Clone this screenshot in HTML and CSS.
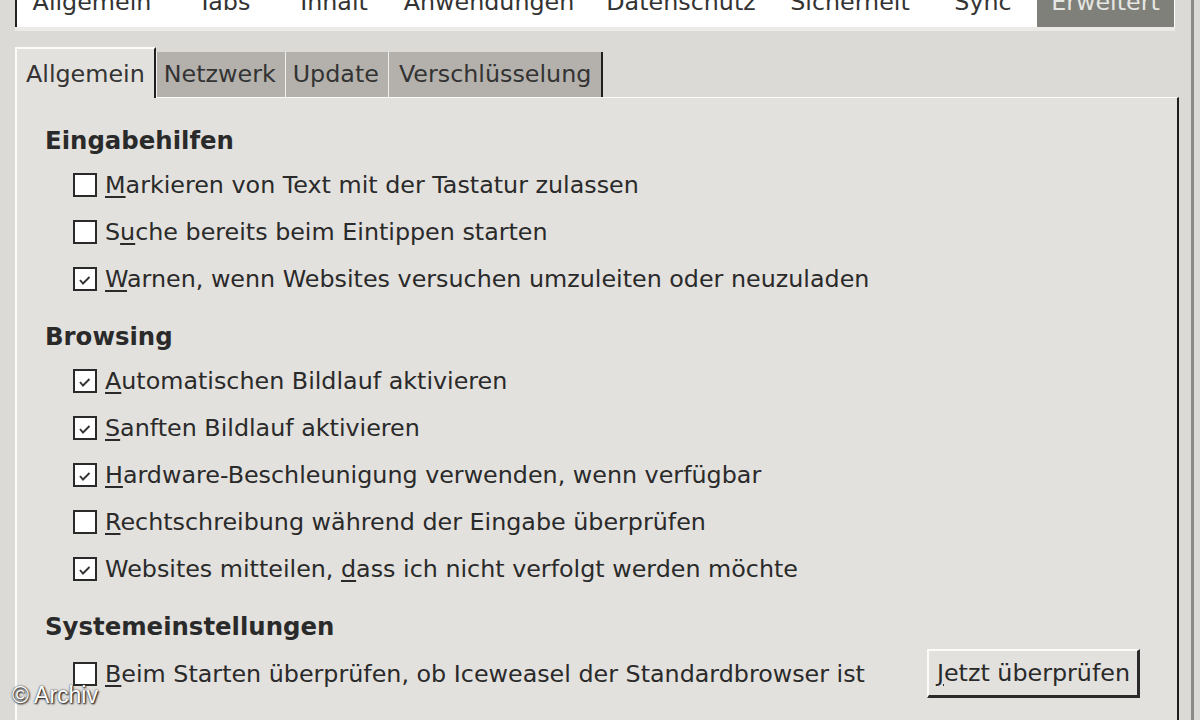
FILE: index.html
```html
<!DOCTYPE html>
<html lang="de">
<head>
  <meta charset="UTF-8" />
  <title>Iceweasel-Einstellungen</title>
  <link rel="stylesheet" href="styles.css">
</head>
<body>

  <div class="window">
    <div class="toolbar">
      <div class="tool tool-first"><span>Allgemein</span></div>
      <div class="tool tool-tabs"><span>Tabs</span></div>
      <div class="tool tool-inhalt"><span>Inhalt</span></div>
      <div class="tool tool-anw"><span>Anwendungen</span></div>
      <div class="tool tool-daten"><span>Datenschutz</span></div>
      <div class="tool tool-sich"><span>Sicherheit</span></div>
      <div class="tool tool-sync"><span>Sync</span></div>
      <div class="tool tool-active"><span>Erweitert</span></div>
    </div>
    <div class="toolbar-shade"></div>

    <div class="notebook">
      <div class="tabs">
        <div class="tab active">Allgemein</div>
        <div class="tab">Netzwerk</div>
        <div class="tab">Update</div>
        <div class="tab last">Verschlüsselung</div>
      </div>

      <div class="panel">
        <div class="group">
          <div class="heading">Eingabehilfen</div>
          <div class="row"><span class="check"></span><span><u>M</u>arkieren von Text mit der Tastatur zulassen</span></div>
          <div class="row"><span class="check"></span><span>S<u>u</u>che bereits beim Eintippen starten</span></div>
          <div class="row"><span class="check on"><svg viewBox="0 0 20 20"><path d="M5 11 L8 14.5 L14.5 8" /></svg></span><span><u>W</u>arnen, wenn Websites versuchen umzuleiten oder neuzuladen</span></div>
        </div>

        <div class="group">
          <div class="heading">Browsing</div>
          <div class="row"><span class="check on"><svg viewBox="0 0 20 20"><path d="M5 11 L8 14.5 L14.5 8" /></svg></span><span><u>A</u>utomatischen Bildlauf aktivieren</span></div>
          <div class="row"><span class="check on"><svg viewBox="0 0 20 20"><path d="M5 11 L8 14.5 L14.5 8" /></svg></span><span><u>S</u>anften Bildlauf aktivieren</span></div>
          <div class="row"><span class="check on"><svg viewBox="0 0 20 20"><path d="M5 11 L8 14.5 L14.5 8" /></svg></span><span><u>H</u>ardware-Beschleunigung verwenden, wenn verfügbar</span></div>
          <div class="row"><span class="check"></span><span><u>R</u>echtschreibung während der Eingabe überprüfen</span></div>
          <div class="row"><span class="check on"><svg viewBox="0 0 20 20"><path d="M5 11 L8 14.5 L14.5 8" /></svg></span><span>Websites mitteilen, <u>d</u>ass ich nicht verfolgt werden möchte</span></div>
        </div>

        <div class="group">
          <div class="heading">Systemeinstellungen</div>
          <div class="row row-button">
            <span class="check"></span><span><u>B</u>eim Starten überprüfen, ob Iceweasel der Standardbrowser ist</span>
            <button type="button" class="btn"><u>J</u>etzt überprüfen</button>
          </div>
        </div>
      </div>
    </div>
  </div>

  <div class="credit">© Archiv</div>

</body>
</html>
```

FILE: styles.css
```css
body {
  margin: 0;
  background: #dcdad6;
  font-family: "DejaVu Sans", Verdana, sans-serif;
  font-size: 23.8px;
  color: #2a2a2a;
  overflow: hidden;
}

.window {
  width: 1194px;
  height: 720px;
  border-right: 3px solid #8c8a86;
  box-sizing: border-box;
  display: flex;
  flex-direction: column;
}

.toolbar {
  display: flex;
  height: 27px;
  margin-right: 16px;
  margin-left: 15px;
  background: #fff;
  border-left: 2px solid #222;
  overflow: hidden;
}

.tool {
  height: 27px;
  text-align: center;
  color: #333;
  box-sizing: border-box;
}

.tool span {
  display: block;
  margin-top: -13px;
  line-height: 30px;
  white-space: nowrap;
}

.tool-first { width: 150px; }
.tool-tabs { width: 114px; }
.tool-inhalt { width: 106px; }
.tool-anw { width: 204px; }
.tool-daten { width: 180px; }
.tool-sich { width: 158px; }
.tool-sync { width: 108px; }

.tool-active {
  width: 137px;
  background: #7e8079;
  color: #e6e6e2;
}

.toolbar-shade {
  height: 4px;
  margin-left: 15px;
  margin-right: 16px;
  background: #ebeae7;
}

.notebook {
  flex: 1;
  display: flex;
  flex-direction: column;
  margin: 16px 12px 0 15px;
}

.tabs {
  display: flex;
  align-items: flex-end;
  height: 50px;
}

.tab {
  height: 45px;
  line-height: 45px;
  padding: 0 9px 0 7px;
  background: #b4b1ad;
  border-left: 1px solid #f1f0ee;
  color: #333;
  white-space: nowrap;
}

.tab.active {
  position: relative;
  height: 51px;
  margin-bottom: -1px;
  line-height: 50px;
  padding: 0 9px 0 9px;
  background: #e3e1de;
  border-left: 2px solid #fbfbfa;
  border-top: 2px solid #fbfbfa;
  border-right: 2px solid #1e1e1e;
  box-sizing: border-box;
  z-index: 1;
}

.tab.last {
  padding-left: 10px;
  padding-right: 10px;
  border-right: 2px solid #1e1e1e;
}

.panel {
  flex: 1;
  background: #e3e1de;
  border-top: 1px solid #fbfbfa;
  border-left: 2px solid #fbfbfa;
  border-right: 2px solid #1e1e1e;
  padding: 23px 37px 0 28px;
}

.group {
  margin-bottom: 15px;
}

.heading {
  height: 40px;
  line-height: 40px;
  font-weight: bold;
  font-size: 24.4px;
}

.row {
  display: flex;
  align-items: center;
  height: 47px;
  padding-left: 28px;
  white-space: nowrap;
}

.row-button {
  margin-top: 3px;
}

.row u {
  text-underline-offset: 3px;
}

.check {
  width: 24px;
  height: 24px;
  margin-right: 8px;
  background: #fff;
  border: 2px solid #2a2a2a;
  box-sizing: border-box;
  flex-shrink: 0;
}

.check svg {
  display: block;
  width: 20px;
  height: 20px;
}

.check svg path {
  fill: none;
  stroke: #333;
  stroke-width: 1.9;
}

.btn {
  margin-left: auto;
  height: 49px;
  padding: 0 7px 0 8px;
  font-family: inherit;
  font-size: 23.8px;
  color: #2a2a2a;
  background: #e3e1de;
  border-top: 2px solid #fbfbfa;
  border-left: 2px solid #fbfbfa;
  border-bottom: 3px solid #2a2a2a;
  border-right: 3px solid #2a2a2a;
}

.credit {
  position: absolute;
  left: 12px;
  top: 682px;
  font-family: "Liberation Sans Narrow", "Liberation Sans", Arial, sans-serif;
  font-stretch: condensed;
  font-size: 23px;
  color: #fff;
  text-shadow: 1px 1px 2px #000, 0 0 2px #333;
}
```
